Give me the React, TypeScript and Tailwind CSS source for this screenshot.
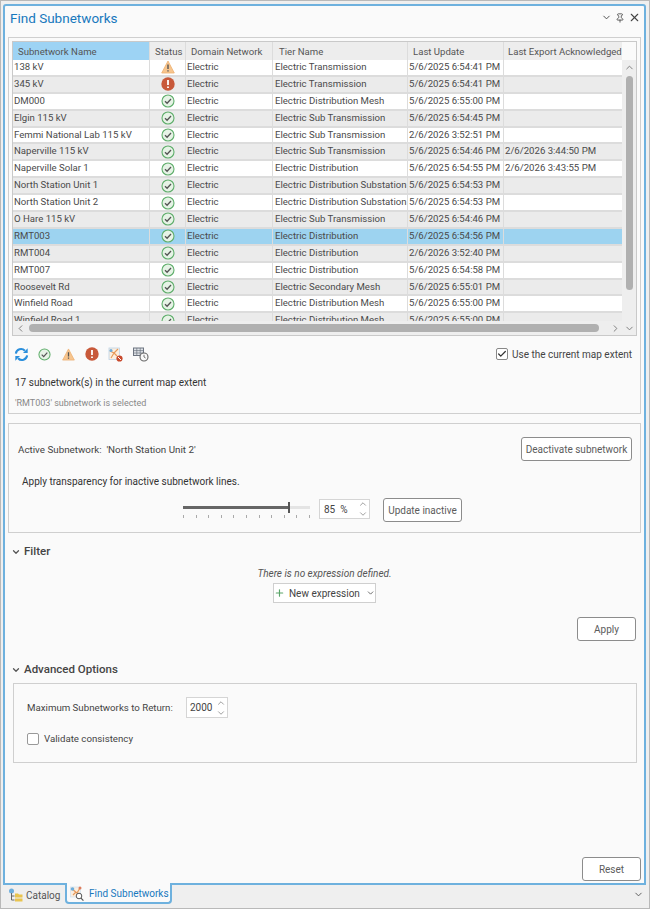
import { Check, ChevronDown, ChevronLeft, ChevronRight, ChevronUp, Pin, Plus, X } from "lucide-react"

const gridCols = "grid grid-cols-[137px_36px_87px_135px_96px_118px]"

type Row = {
  name: string
  status: "warn" | "error" | "ok"
  tier: string
  update: string
  ack?: string
}

const rows: Row[] = [
  { name: "138 kV", status: "warn", tier: "Electric Transmission", update: "5/6/2025 6:54:41 PM" },
  { name: "345 kV", status: "error", tier: "Electric Transmission", update: "5/6/2025 6:54:41 PM" },
  { name: "DM000", status: "ok", tier: "Electric Distribution Mesh", update: "5/6/2025 6:55:00 PM" },
  { name: "Elgin 115 kV", status: "ok", tier: "Electric Sub Transmission", update: "5/6/2025 6:54:45 PM" },
  { name: "Femmi National Lab 115 kV", status: "ok", tier: "Electric Sub Transmission", update: "2/6/2026 3:52:51 PM" },
  { name: "Naperville 115 kV", status: "ok", tier: "Electric Sub Transmission", update: "5/6/2025 6:54:46 PM", ack: "2/6/2026 3:44:50 PM" },
  { name: "Naperville Solar 1", status: "ok", tier: "Electric Distribution", update: "5/6/2025 6:54:55 PM", ack: "2/6/2026 3:43:55 PM" },
  { name: "North Station Unit 1", status: "ok", tier: "Electric Distribution Substation", update: "5/6/2025 6:54:53 PM" },
  { name: "North Station Unit 2", status: "ok", tier: "Electric Distribution Substation", update: "5/6/2025 6:54:53 PM" },
  { name: "O Hare 115 kV", status: "ok", tier: "Electric Sub Transmission", update: "5/6/2025 6:54:46 PM" },
  { name: "RMT003", status: "ok", tier: "Electric Distribution", update: "5/6/2025 6:54:56 PM" },
  { name: "RMT004", status: "ok", tier: "Electric Distribution", update: "2/6/2026 3:52:40 PM" },
  { name: "RMT007", status: "ok", tier: "Electric Distribution", update: "5/6/2025 6:54:58 PM" },
  { name: "Roosevelt Rd", status: "ok", tier: "Electric Secondary Mesh", update: "5/6/2025 6:55:01 PM" },
  { name: "Winfield Road", status: "ok", tier: "Electric Distribution Mesh", update: "5/6/2025 6:55:00 PM" },
  { name: "Winfield Road 1", status: "ok", tier: "Electric Distribution Mesh", update: "5/6/2025 6:55:00 PM" },
]

function OkIcon({ size = 14 }: { size?: number }) {
  return (
    <svg width={size} height={size} viewBox="0 0 14 14" className="shrink-0">
      <circle cx="7" cy="7" r="6" fill="#e6f3e6" stroke="#5fae6b" strokeWidth="1.1" />
      <path d="M4 7.2l2.1 2.1L10 5" fill="none" stroke="#555" strokeWidth="1.3" />
    </svg>
  )
}

function WarnIcon({ size = 14 }: { size?: number }) {
  return (
    <svg width={size} height={size} viewBox="0 0 14 14" className="shrink-0">
      <path d="M7 1L13.3 13H.7z" fill="#f7c58e" stroke="#eeb070" strokeWidth="0.8" />
      <path d="M7 4.5v4.6M7 10.2v1.4" stroke="#555" strokeWidth="1.4" />
    </svg>
  )
}

function ErrorIcon({ size = 14 }: { size?: number }) {
  return (
    <svg width={size} height={size} viewBox="0 0 14 14" className="shrink-0">
      <circle cx="7" cy="7" r="6.7" fill="#c8593a" />
      <path d="M7 3v5M7 9.4v1.7" stroke="#fff" strokeWidth="1.8" />
    </svg>
  )
}

function RefreshIcon() {
  return (
    <svg width="15" height="15" viewBox="0 0 16 16" className="shrink-0">
      <path d="M2 7a5.5 5.5 0 0 1 9.6-3" fill="none" stroke="#2b8fdc" strokeWidth="2.2" />
      <path d="M14.6 1.4v5h-5z" fill="#2b8fdc" />
      <path d="M14 9a5.5 5.5 0 0 1-9.6 3" fill="none" stroke="#2b8fdc" strokeWidth="2.2" />
      <path d="M1.4 14.6v-5h5z" fill="#2b8fdc" />
    </svg>
  )
}

function MapBlockedIcon({ size = 15 }: { size?: number }) {
  return (
    <svg width={size} height={size} viewBox="0 0 15 15" className="shrink-0">
      <rect x="1" y="1" width="10.5" height="11.5" fill="#fbeee0" stroke="#bcd3e6" strokeWidth="0.8" />
      <path d="M2 4l4 2 4-4M3 11l3-5 3 3" fill="none" stroke="#e79a5a" strokeWidth="1.1" />
      <circle cx="3" cy="3.5" r="1.5" fill="#6daedd" />
      <circle cx="11.5" cy="11.5" r="3.1" fill="#c8492c" />
      <path d="M10 10l3 3" stroke="#fff" strokeWidth="1" />
    </svg>
  )
}

function TableClockIcon() {
  return (
    <svg width="16" height="15" viewBox="0 0 16 15" className="shrink-0">
      <rect x="0.5" y="1" width="10" height="7.5" fill="#dfe3e8" stroke="#6d7480" strokeWidth="1" />
      <path d="M.5 3.6h10M3.8 1v7.5M7.2 1v7.5M.5 6h10" stroke="#6d7480" strokeWidth="0.7" />
      <circle cx="11" cy="10" r="4" fill="#fafafa" stroke="#666" strokeWidth="1.1" />
      <path d="M11 7.8V10l1.6 1" fill="none" stroke="#666" strokeWidth="0.9" />
    </svg>
  )
}

function FindTabIcon() {
  return (
    <svg width="14" height="15" viewBox="0 0 14 15" className="shrink-0">
      <rect x="0.5" y="1" width="10" height="10" fill="#fbeee0" stroke="#cfe0ee" strokeWidth="0.7" />
      <path d="M2 3l5 4 3-5M3 9l3-3" fill="none" stroke="#e79a5a" strokeWidth="1.2" />
      <circle cx="2.5" cy="3" r="1.8" fill="#6daedd" />
      <circle cx="10" cy="2" r="1.5" fill="#de7d5c" />
      <circle cx="9" cy="10" r="2.8" fill="#fff" stroke="#555" strokeWidth="1" />
      <path d="M11 12.2l2.4 2.4" stroke="#555" strokeWidth="1.2" />
    </svg>
  )
}

function CatalogIcon() {
  return (
    <svg width="15" height="15" viewBox="0 0 15 15" className="shrink-0">
      <circle cx="3.5" cy="3" r="2.5" fill="#6daedd" />
      <path d="M3.5 5v7h3M3.5 8h3" fill="none" stroke="#666" strokeWidth="1" />
      <path d="M7 5.5h3l1 1h3.5v3H7z" fill="#e9c44f" />
      <path d="M7 10.5h7.5v3H7z" fill="#e9c44f" />
    </svg>
  )
}

function StatusIcon({ status }: { status: Row["status"] }) {
  if (status === "warn") return <WarnIcon />
  if (status === "error") return <ErrorIcon />
  return <OkIcon />
}

function Cell({ children, className }: { children?: React.ReactNode; className?: string }) {
  return (
    <div className={`h-full overflow-hidden whitespace-nowrap border-r border-[#dcdcdc] leading-[14px] ${className ?? "pl-[1px]"}`}>
      {children}
    </div>
  )
}

function HeadCell({ children, className }: { children: React.ReactNode; className: string }) {
  return <div className={`flex h-full items-center border-r border-[#dcdcdc] ${className}`}>{children}</div>
}

function Table() {
  return (
    <div className="h-[295px] border border-[#c9c9c9] bg-[#eeeeee] text-[9.6px] text-[#4a4a4a]">
      <div className="flex h-[279px]">
        <div className="w-[609px] shrink-0">
          <div className={`${gridCols} h-[18px] items-center whitespace-nowrap bg-[#ededed] text-[#555]`}>
            <HeadCell className="bg-[#9dd3f4] pl-[5px]">Subnetwork Name</HeadCell>
            <HeadCell className="pl-[5px]">Status</HeadCell>
            <HeadCell className="pl-[5px]">Domain Network</HeadCell>
            <HeadCell className="pl-[6px]">Tier Name</HeadCell>
            <HeadCell className="pl-[5px]">Last Update</HeadCell>
            <HeadCell className="border-r-0 pl-[4px]">Last Export Acknowledged</HeadCell>
          </div>
          <div className="h-[261px] overflow-hidden">
            {rows.map((r, i) => {
              const selected = r.name === "RMT003"
              const bg = selected ? "bg-[#9dd3f0]" : i % 2 === 0 ? "bg-white" : "bg-[#ebebeb]"
              return (
                <div key={r.name} className={`${gridCols} h-[16.9px] items-center border-b-2 border-[#dcdcdc] ${bg}`}>
                  <Cell>{r.name}</Cell>
                  <Cell className="flex items-center justify-center">
                    <StatusIcon status={r.status} />
                  </Cell>
                  <Cell>Electric</Cell>
                  <Cell className="pl-[2px]">{r.tier}</Cell>
                  <Cell>{r.update}</Cell>
                  <Cell className="border-r-0 pl-[1px]">{r.ack}</Cell>
                </div>
              )
            })}
          </div>
        </div>
        <div className="flex flex-1 flex-col items-center">
          <div className="h-[18px] w-full bg-[#fafafa]" />
          <ChevronUp size={11} className="mt-[2px] text-[#777]" />
          <div className="mt-[3px] h-[214px] w-[7px] rounded-full bg-[#b0b0b0]" />
        </div>
      </div>
      <div className="flex h-[14px] items-center">
        <ChevronLeft size={11} className="ml-[2px] text-[#777]" />
        <div className="ml-[3px] h-[8px] w-[570px] rounded-full bg-[#b0b0b0]" />
        <ChevronRight size={11} className="ml-[11px] text-[#777]" />
        <ChevronDown size={11} className="ml-[3px] text-[#777]" />
      </div>
    </div>
  )
}

function Btn({ children, className }: { children: React.ReactNode; className?: string }) {
  return (
    <button className={`flex items-center justify-center whitespace-nowrap rounded-[3px] border border-[#8c8c8c] bg-white text-[10px] text-[#5c5c5c] ${className ?? ""}`}>
      {children}
    </button>
  )
}

function Spinner() {
  return (
    <div className="flex flex-col items-center text-[#666]">
      <ChevronUp size={10} strokeWidth={1.5} />
      <ChevronDown size={10} strokeWidth={1.5} />
    </div>
  )
}

function SectionTitle({ children }: { children: React.ReactNode }) {
  return (
    <div className="flex h-[15px] items-center text-[11.5px] font-medium text-[#444]">
      <ChevronDown size={10} strokeWidth={3} className="mr-[3px] text-[#555]" />
      {children}
    </div>
  )
}

export default function App() {
  const ticks = Array.from({ length: 11 })
  return (
    <div className="flex h-[909px] w-[650px] flex-col border border-[#b9b9b9] bg-[#efefef] pl-[2px] pr-[3px] pt-[3px] font-['Roboto','Open_Sans',sans-serif] leading-[15px]">
      <div className="flex h-[881px] flex-col rounded-t-[3px] border-2 border-[#6eb1de] bg-[#fafafa] pl-[3px] pr-[3px]">
        <div className="flex h-[31px] shrink-0 items-start justify-between pl-[2px] pt-[3px]">
          <span className="text-[13.5px] leading-[18px] text-[#1878bd]">Find Subnetworks</span>
          <div className="flex items-center gap-[3px] pt-[2px] text-[#444]">
            <ChevronDown size={11} />
            <Pin size={10} />
            <X size={13} />
          </div>
        </div>

        <div className="h-[377px] shrink-0 border border-[#cfcfcf] px-[3px] pt-[3px]">
          <Table />
          <div className="mt-[10px] flex h-[16px] items-center">
            <div className="ml-[2px]"><RefreshIcon /></div>
            <div className="ml-[9px]"><OkIcon size={13} /></div>
            <div className="ml-[11px]"><WarnIcon size={13} /></div>
            <div className="ml-[10px]"><ErrorIcon size={14} /></div>
            <div className="ml-[9px]"><MapBlockedIcon /></div>
            <div className="ml-[10px]"><TableClockIcon /></div>
            <label className="ml-auto mr-[5px] flex items-center gap-[4px] text-[10px] text-[#444]">
              <span className="flex h-[12px] w-[12px] items-center justify-center rounded-[2px] border border-[#888] bg-white">
                <Check size={10} strokeWidth={3} className="text-[#333]" />
              </span>
              Use the current map extent
            </label>
          </div>
          <div className="mt-[13px] pl-[3px] text-[10px] text-[#333]">17 subnetwork(s) in the current map extent</div>
          <div className="mt-[6px] pl-[3px] text-[9px] text-[#888]">'RMT003' subnetwork is selected</div>
        </div>

        <div className="mt-[9px] h-[110px] shrink-0 border border-[#cfcfcf] pt-[13px]">
          <div className="flex items-center justify-between pl-[9px] pr-[8px]">
            <span className="text-[9.8px] text-[#444]">Active Subnetwork:&nbsp; 'North Station Unit 2'</span>
            <Btn className="h-[24px] w-[111px]">Deactivate subnetwork</Btn>
          </div>
          <div className="mt-[13px] pl-[13px] text-[10px] text-[#333]">Apply transparency for inactive subnetwork lines.</div>
          <div className="mt-[9px] flex items-start">
            <div className="ml-[174px] w-[127px] pt-[8px]">
              <div className="relative h-[3px] bg-[#e4e4e4]">
                <div className="h-full w-[106px] bg-[#666]" />
                <div className="absolute left-[105px] top-[-4px] h-[11px] w-[2px] bg-[#555]" />
              </div>
              <div className="mt-[6px] flex justify-between">
                {ticks.map((_, i) => (
                  <span key={i} className="h-[3px] w-px bg-[#aaa]" />
                ))}
              </div>
            </div>
            <div className="ml-[9px] mt-[1px] flex h-[20px] w-[51px] items-center justify-between border border-[#d5d5d5] bg-white pl-[4px] pr-[1px] text-[10px] text-[#444]">
              <span>85&nbsp; %</span>
              <Spinner />
            </div>
            <Btn className="ml-[13px] h-[24px] w-[79px]">Update inactive</Btn>
          </div>
        </div>

        <div className="mt-[11px] shrink-0 pl-[3px]">
          <SectionTitle>Filter</SectionTitle>
        </div>
        <div className="mt-[7px] shrink-0 text-center text-[10px] italic text-[#555]">There is no expression defined.</div>
        <div className="mt-[2px] flex shrink-0 justify-center">
          <div className="flex h-[20px] w-[103px] items-center justify-center whitespace-nowrap border border-[#cfcfcf] bg-white text-[10px] text-[#444]">
            <Plus size={12} strokeWidth={2.5} className="mr-[4px] text-[#5aa469]" />
            New expression
            <ChevronDown size={10} className="ml-[6px]" />
          </div>
        </div>
        <div className="mt-[14px] flex shrink-0 justify-end pr-[5px]">
          <Btn className="h-[24px] w-[59px]">Apply</Btn>
        </div>

        <div className="mt-[21px] shrink-0 pl-[3px]">
          <SectionTitle>Advanced Options</SectionTitle>
        </div>
        <div className="ml-[5px] mr-[4px] mt-[6px] h-[80px] shrink-0 border border-[#cfcfcf] pl-[13px] pt-[13px]">
          <div className="flex items-center whitespace-nowrap text-[9.7px] text-[#444]">
            <span className="w-[159px]">Maximum Subnetworks to Return:</span>
            <div className="flex h-[21px] w-[42px] items-center justify-between border border-[#d5d5d5] bg-white pl-[3px] pr-[1px] text-[10px]">
              2000
              <Spinner />
            </div>
          </div>
          <label className="mt-[13px] flex items-center gap-[5px] text-[9.7px] text-[#444]">
            <span className="h-[12px] w-[12px] rounded-[2px] border border-[#999] bg-white" />
            Validate consistency
          </label>
        </div>

        <div className="mb-[2px] mt-auto flex justify-end">
          <Btn className="h-[24px] w-[59px]">Reset</Btn>
        </div>
      </div>

      <div className="flex h-[20px] items-start whitespace-nowrap text-[10px]">
        <div className="flex h-[20px] w-[62px] items-center gap-[3px] pl-[5px] text-[#555]">
          <CatalogIcon />
          Catalog
        </div>
        <div className="-mt-[2px] flex h-[21px] w-[107px] items-center gap-[5px] rounded-b-[4px] border-2 border-t-0 border-[#6eb1de] bg-[#fafafa] pl-[3px] pt-[2px] text-[#1878bd]">
          <FindTabIcon />
          Find Subnetworks
        </div>
        <ChevronDown size={11} className="ml-auto mr-[2px] mt-[4px] text-[#555]" />
      </div>
    </div>
  )
}
